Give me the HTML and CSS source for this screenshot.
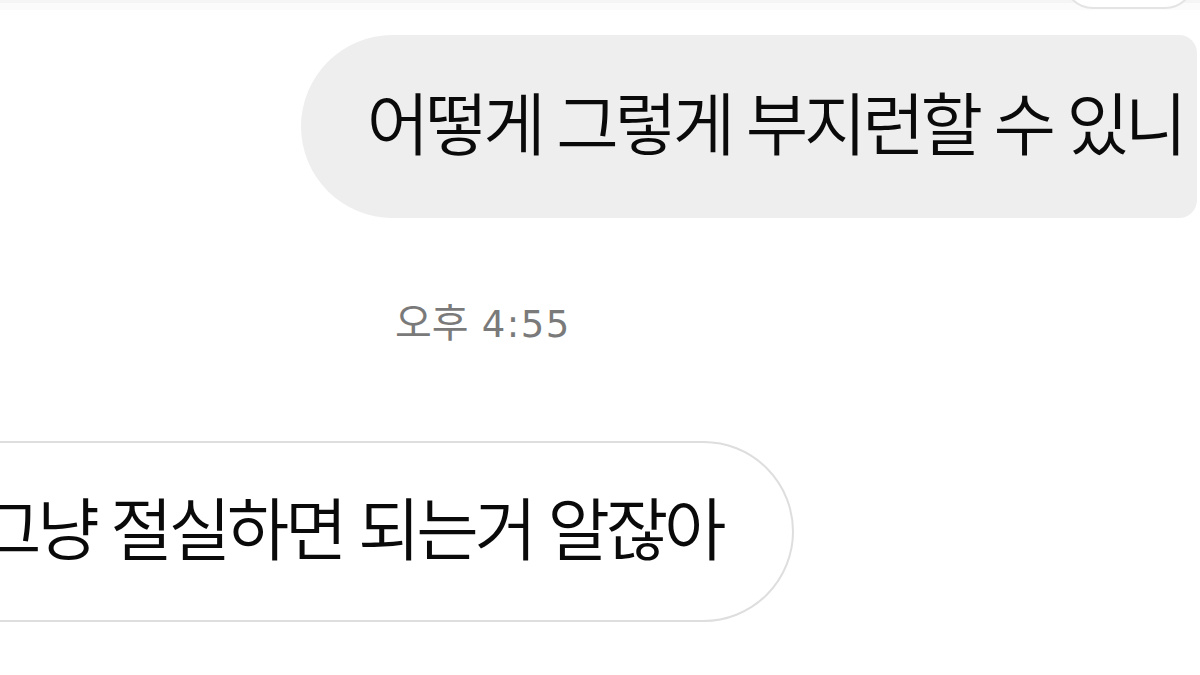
FILE: index.html
```html
<!DOCTYPE html>
<html lang="ko">
<head>
<meta charset="utf-8">
<title>대화</title>
<link rel="stylesheet" href="styles.css">
</head>
<body>
  <div class="topbar"></div>
  <main class="chat">
    <div class="row row-out">
      <div class="bubble bubble-prev"></div>
    </div>
    <div class="row row-out">
      <div class="bubble bubble-out">어떻게 그렇게 부지런할 수 있니</div>
    </div>
    <div class="time">오후 <span class="time-num">4:55</span></div>
    <div class="row row-in">
      <div class="bubble bubble-in">그냥 절실하면 되는거 알잖아</div>
    </div>
  </main>
</body>
</html>
```

FILE: styles.css
```css
html, body {
  margin: 0;
  padding: 0;
  background: #ffffff;
}

body {
  width: 1200px;
  height: 675px;
  overflow: hidden;
  position: relative;
  font-family: "Noto Sans CJK KR", "Noto Sans", sans-serif;
  color: #0a0a0a;
}

/* faint status strip along the top edge */
.topbar {
  position: absolute;
  left: 0;
  top: 0;
  width: 100%;
  height: 10px;
  background: linear-gradient(#f5f5f5 0, #f5f5f5 3px, #fbfbfb 3px, #fbfbfb 10px);
  z-index: 0;
}

.chat {
  position: relative;
  z-index: 1;
  display: flex;
  flex-direction: column;
}

.row {
  display: flex;
}

.row-out {
  justify-content: flex-end;
}

.row-in {
  justify-content: flex-start;
}

.bubble {
  box-sizing: border-box;
  display: flex;
  align-items: center;
  white-space: nowrap;
  font-size: 68px;
  font-weight: 350;
  letter-spacing: -4.3px;
  line-height: 1;
}

/* bottom edge of the previous message, scrolled mostly out of view */
.bubble-prev {
  width: 132px;
  height: 60px;
  margin-top: -51px;
  margin-right: 5px;
  background: #ffffff;
  border: 2px solid #e4e4e4;
  border-radius: 30px;
}

.bubble-out {
  margin-top: 26px;
  margin-right: 3px;
  height: 183px;
  padding: 0 14px 12px 66px;
  background: #eeeeee;
  border-radius: 92px 18px 18px 92px;
}

.time {
  margin-top: 78px;
  padding-left: 395px;
  font-size: 40px;
  line-height: 48px;
  color: #7a7a7a;
  white-space: nowrap;
}

.time-num {
  font-family: "DejaVu Sans", "Roboto", sans-serif;
  font-size: 37px;
  letter-spacing: 1.5px;
  margin-left: 2px;
}

.bubble-in {
  margin-top: 92px;
  margin-left: -115px;
  height: 181px;
  padding: 0 70px 12px 92px;
  background: #ffffff;
  border: 2.5px solid #dedede;
  border-radius: 0 92px 92px 0;
}
```
